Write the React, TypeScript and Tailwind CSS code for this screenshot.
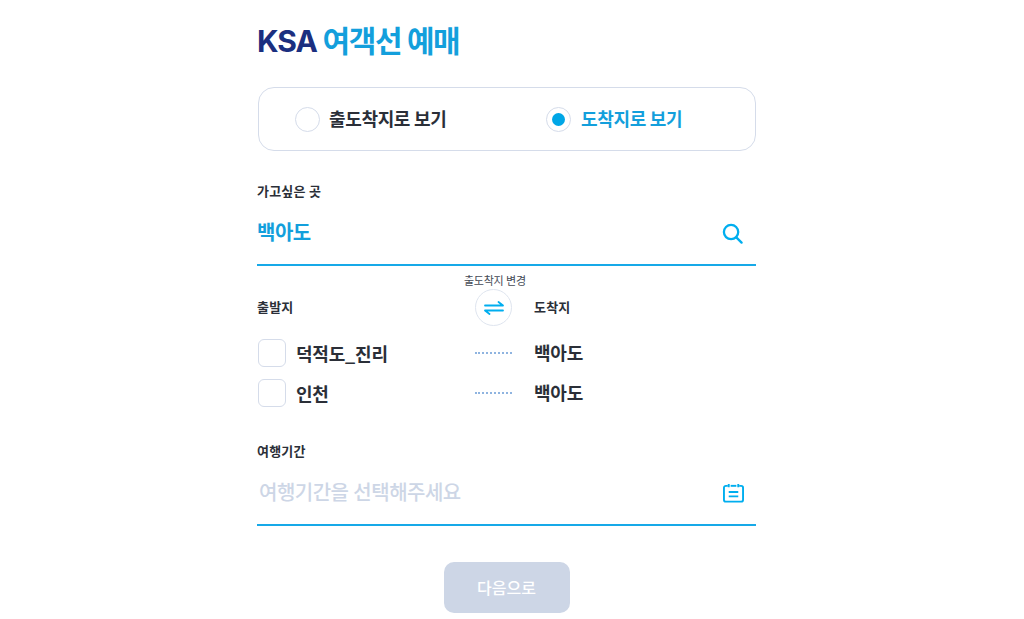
const font = "font-['Inter','Noto_Sans_CJK_KR',sans-serif]";

function Radio({ checked, label }: { checked?: boolean; label: string }) {
  return (
    <div className={`flex items-center ${checked ? "gap-[10px]" : "gap-[9px]"}`}>
      <span className="flex h-[25px] w-[25px] items-center justify-center rounded-full border border-[#d5dcea] bg-white">
        {checked && <span className="h-[13px] w-[13px] rounded-full bg-[#00a6e6]" />}
      </span>
      <span className={`text-[18px] font-bold tracking-[-0.35px] ${checked ? "text-[#139fdc]" : "text-[#2b2f38]"}`}>{label}</span>
    </div>
  );
}

function Route({ from, className }: { from: string; className?: string }) {
  return (
    <div className={`flex h-[28px] items-center ${className ?? ""}`}>
      <span className="ml-[1px] h-[28px] w-[28px] rounded-[6px] border border-[#d5dcea] bg-white" />
      <span className="ml-[10px] w-[179px] font-['Noto_Sans_CJK_KR',sans-serif] text-[18px] font-bold tracking-[-0.2px] text-[#2b2f38]">{from}</span>
      <span className="w-[37px] border-t-2 border-dotted border-[#8fb4e0]" />
      <span className="ml-[22px] text-[18px] font-bold tracking-[-0.2px] text-[#2b2f38]">백아도</span>
    </div>
  );
}

export default function App() {
  return (
    <div className={`ml-[257px] h-[619px] w-[499px] overflow-hidden bg-white ${font}`}>
      <h1 className="h-[87px] pt-[18px] text-[30px] leading-[46px] font-bold tracking-[-1.4px] text-[#139fdc]">
        <span className="tracking-[-1px] text-[#1b2f80]">KSA</span> 여객선 예매
      </h1>

      <div className="ml-[1px] flex h-[64px] items-center rounded-[16px] border border-[#d5dcea] pl-[36px]">
        <div className="w-[251px]">
          <Radio label="출도착지로 보기" />
        </div>
        <Radio checked label="도착지로 보기" />
      </div>

      <div className="mt-[31px] text-[13px] leading-[18px] font-bold tracking-[0.2px] text-[#2b2f38]">가고싶은 곳</div>
      <div className="mt-[11px] flex h-[55px] items-start justify-between border-b-2 border-[#17a9e8] pt-[7px]">
        <span className="text-[20px] leading-[30px] font-bold tracking-[-0.5px] text-[#139fdc]">백아도</span>
        <svg className="mt-[5px] mr-[13px]" width="21" height="21" viewBox="0 0 22 22" fill="none" stroke="#00aeef" strokeWidth="2.4" strokeLinecap="round">
          <circle cx="9.500" cy="9.500" r="7.500" />
          <path d="M15 15 20.500 20.500" />
        </svg>
      </div>

      <div className="relative mt-[23px] flex h-[37px] items-center">
        <span className="w-[218px] text-[13px] font-bold tracking-[0.2px] text-[#2b2f38]">출발지</span>
        <span className="absolute top-[-15px] left-[207px] text-[11px] leading-[14px] tracking-[-0.3px] whitespace-nowrap text-[#444a55]">출도착지 변경</span>
        <span className="flex h-[37px] w-[37px] items-center justify-center rounded-full border border-[#dfe5ef] bg-white">
          <svg width="20" height="14" viewBox="0 0 20 14" fill="none" stroke="#00aeef" strokeWidth="1.8" strokeLinecap="round" strokeLinejoin="round">
            <path d="M1 4.500h18L14.500 1" />
            <path d="M19 9.500H1L5.500 13" />
          </svg>
        </span>
        <span className="ml-[22px] text-[13px] font-bold tracking-[0.2px] text-[#2b2f38]">도착지</span>
      </div>

      <Route from="덕적도_진리" className="mt-[13px]" />
      <Route from="인천" className="mt-[12px]" />

      <div className="mt-[35px] text-[13px] leading-[18px] font-bold tracking-[0.2px] text-[#2b2f38]">여행기간</div>
      <div className="mt-[11px] flex h-[55px] items-start justify-between border-b-2 border-[#17a9e8] pt-[7px]">
        <span className="pl-[2px] text-[20px] leading-[30px] font-medium tracking-[-0.5px] text-[#cdd6e6]">여행기간을 선택해주세요</span>
        <svg className="mt-[5px] mr-[12px]" width="21" height="20" viewBox="0 0 22 20" fill="none" stroke="#00aeef" strokeWidth="2" strokeLinejoin="round">
          <path d="M5 2.500H3a2 2 0 0 0-2 2V17a2 2 0 0 0 2 2h16a2 2 0 0 0 2-2V4.500a2 2 0 0 0-2-2h-2" />
          <path d="M8 2.500h6" />
          <path d="M6 0.500v3.500M16 0.500v3.500" />
          <path d="M6 9h10M6 13.500h10" />
        </svg>
      </div>

      <button className={`mx-auto mt-[36px] block h-[51px] w-[126px] rounded-[10px] bg-[#cdd6e6] text-[16px] font-medium text-white ${font}`}>다음으로</button>
    </div>
  );
}
